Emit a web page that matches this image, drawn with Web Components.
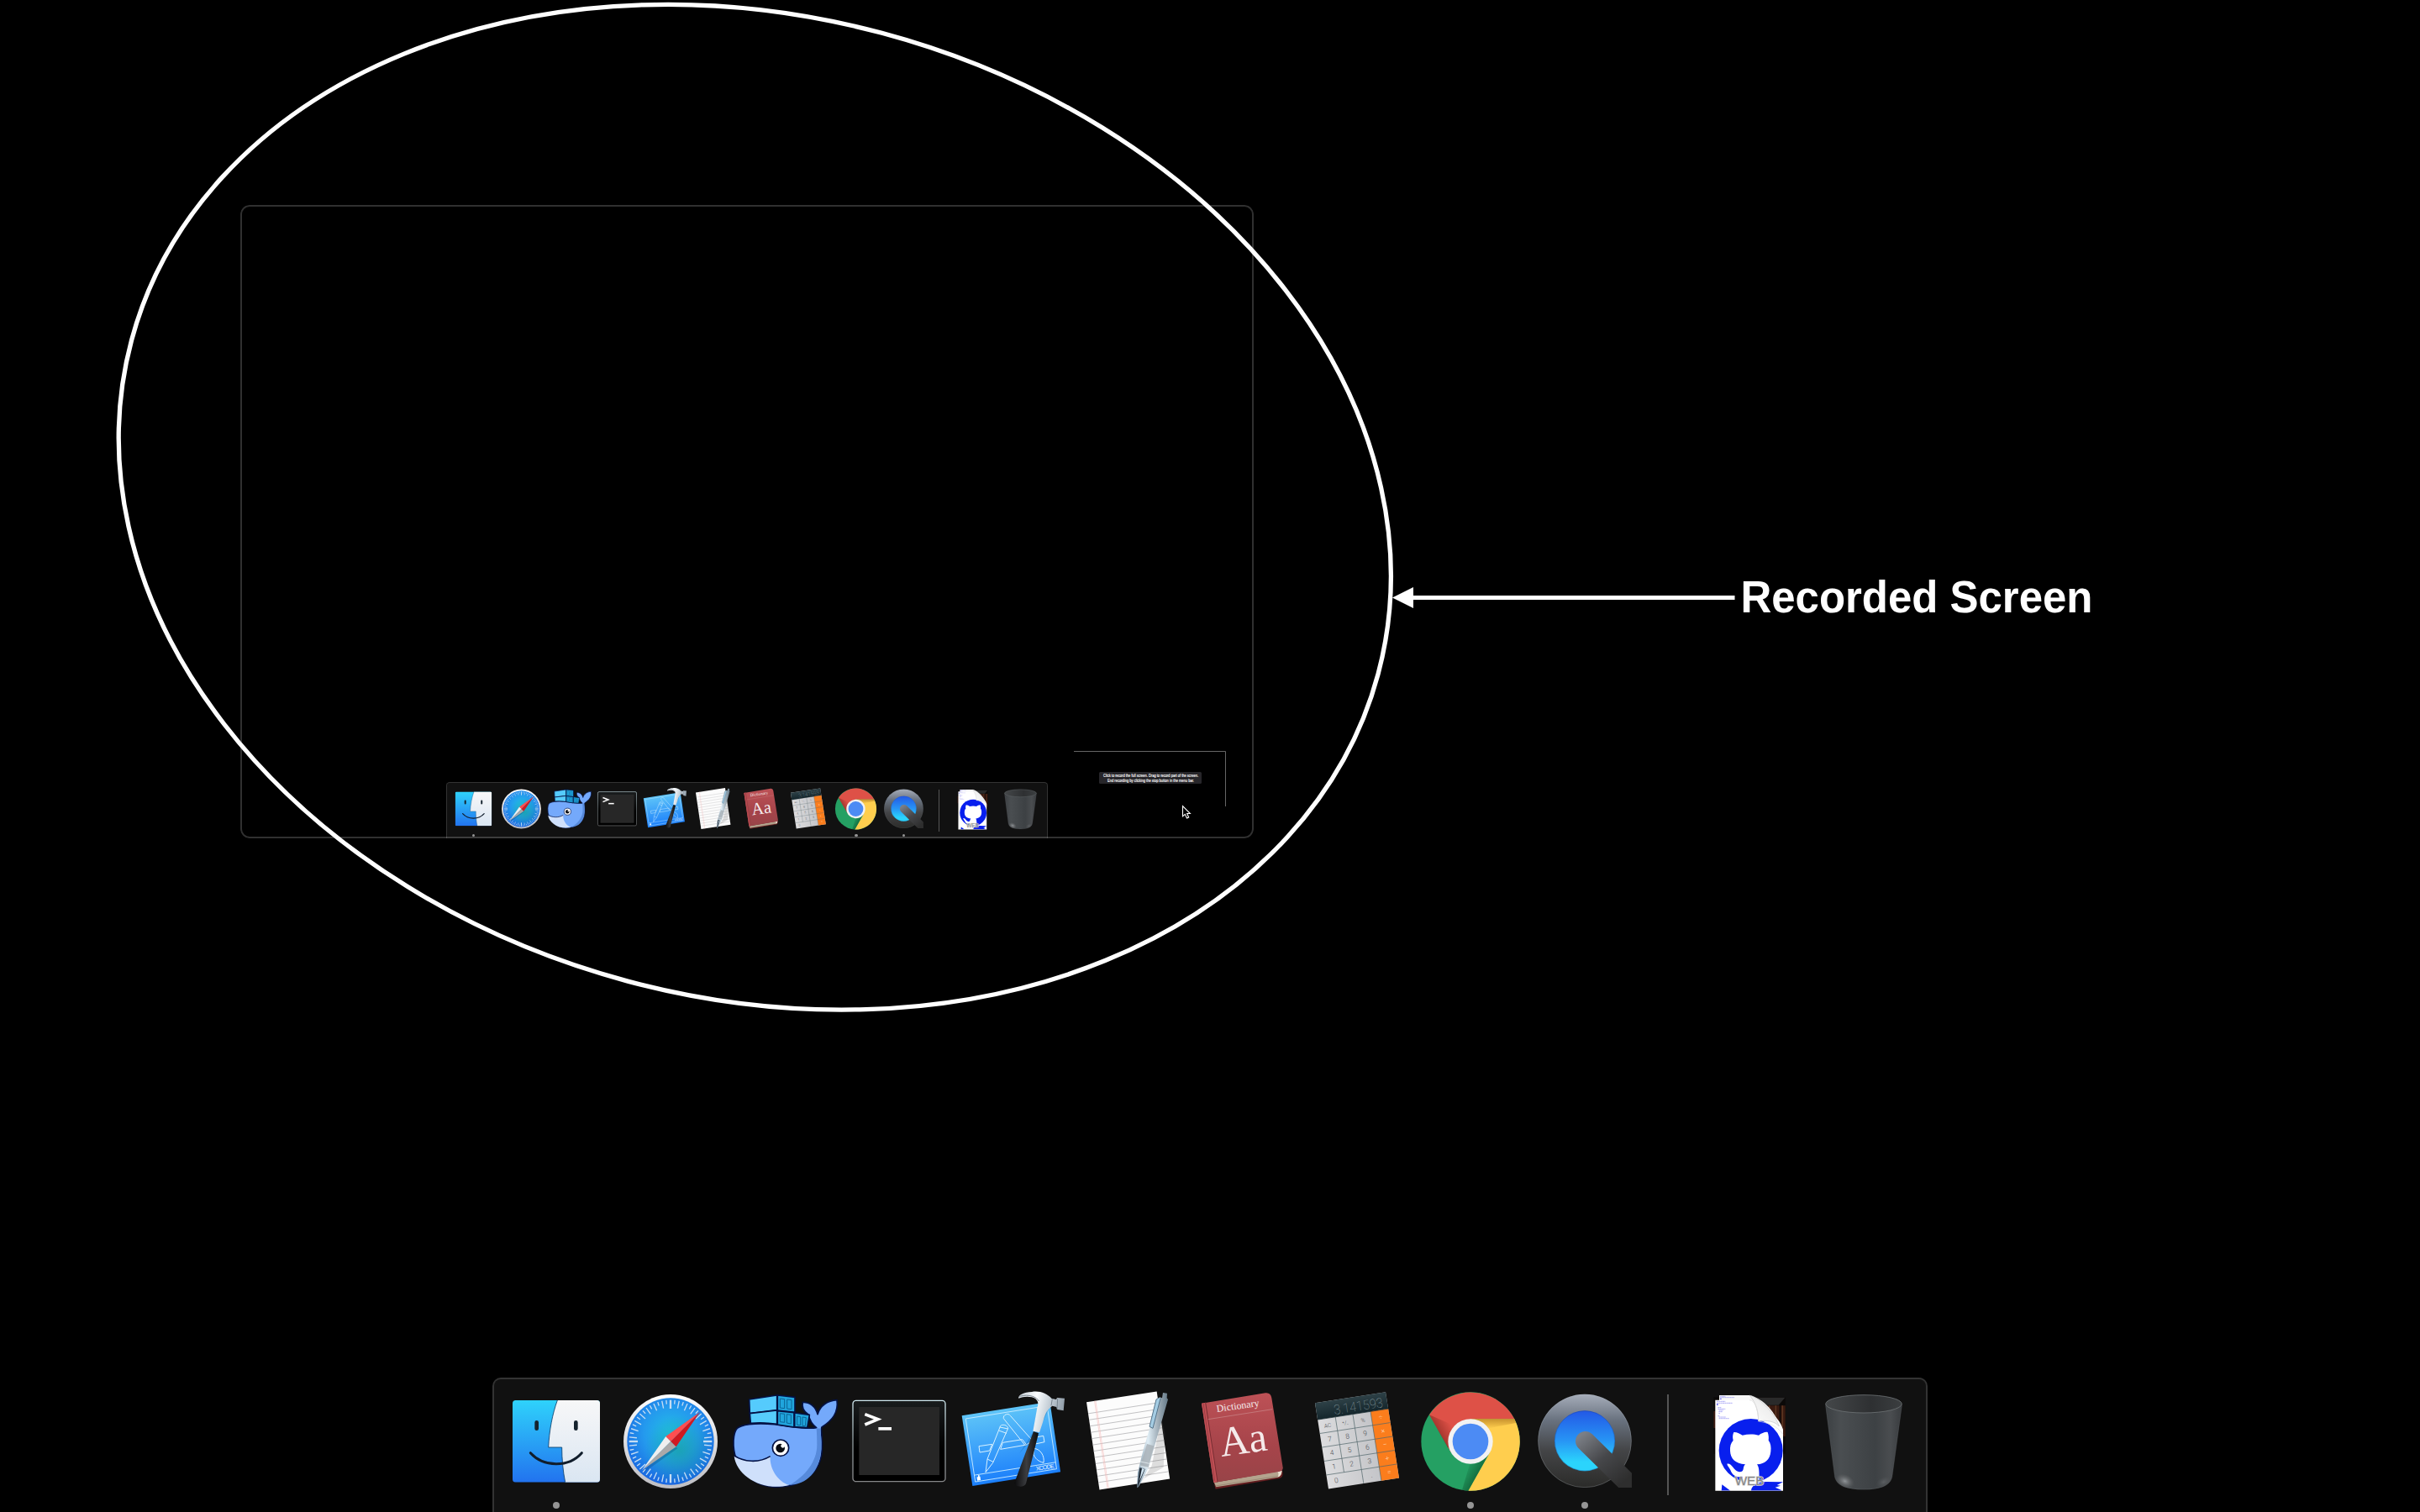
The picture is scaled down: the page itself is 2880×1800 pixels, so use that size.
<!DOCTYPE html>
<html lang="en">
<head>
<meta charset="utf-8">
<title>Recorded Screen</title>
<style>
html,body{margin:0;background:#000}
body{width:2880px;height:1800px;overflow:hidden;font-family:"Liberation Sans",Arial,sans-serif}
</style>
</head>
<body>
<desktop-screen>
  <recorded-window slot="canvas">
    <record-prompt slot="prompt"></record-prompt>
    <mac-dock slot="dock"></mac-dock>
  </recorded-window>
  <mac-dock slot="dock"></mac-dock>
  <screen-annotation slot="overlay"></screen-annotation>
</desktop-screen>
<script>
const define = (name, html) => customElements.define(name, class extends HTMLElement {
  constructor() { super(); this.attachShadow({ mode: 'open' }).innerHTML = html; }
});

/* Minute marks round the compass face */
const compassTicks = () => {
  let s = '';
  for (let i = 0; i < 60; i++) {
    const main = i % 15 === 0, long = i % 2 === 0 || main;
    s += `<path d="M684 110V${main ? 141 : long ? 137 : 124}" stroke-width="${main ? 7 : 4}" transform="rotate(${i * 6} 684 258)"/>`;
  }
  return s;
};

const paperRules = () => {
  let s = '';
  for (let y = 41; y < 310; y += 22.6) s += `<path d="M0 ${y}H254"/>`;
  return s;
};

const calcKeys = () => {
  const rows = [['AC', '⁺/₋', '%', '÷'], ['7', '8', '9', '×'], ['4', '5', '6', '−'], ['1', '2', '3', '+'], ['0', '', '.', '=']];
  let s = '';
  rows.forEach((r, j) => r.forEach((t, i) => {
    if (t) s += `<text x="${32 + i * 64}" y="${93 + j * 50}" font-size="${i === 3 ? 26 : j === 0 ? 20 : 25}" fill="${i === 3 ? '#ffd9b8' : '#4a4c50'}">${t}</text>`;
  }));
  return s;
};

const ICONS = {
finder: { x: 72, svg: `
<defs><linearGradient id="a" x1="0" y1="0" x2="0" y2="1"><stop offset="0" stop-color="#2fd2fb"/><stop offset="1" stop-color="#2273ef"/></linearGradient>
<linearGradient id="b" x1="0" y1="0" x2="0" y2="1"><stop offset="0" stop-color="#f7f7f8"/><stop offset="1" stop-color="#dae6f2"/></linearGradient>
<clipPath id="c"><rect x="120" y="111" width="312" height="293" rx="11"/></clipPath></defs>
<g clip-path="url(#c)"><rect x="120" y="111" width="312" height="293" fill="url(#a)"/>
<path d="M280 111C262 160 251 220 248 279H296C296 320 300 365 308 404H432V111Z" fill="url(#b)"/>
<path d="M280 111C262 160 251 220 248 279H296C296 320 300 365 308 404" fill="none" stroke="#0b3f6b" stroke-width="2.5"/></g>
<path d="M206 190V212M346 190V212" stroke="#15232e" stroke-width="14" stroke-linecap="round"/>
<path d="M184 299C230 350 320 352 367 299" fill="none" stroke="#111d2b" stroke-width="9" stroke-linecap="round"/>` },

safari: { x: 480, svg: `
<defs><radialGradient id="a" cx=".5" cy=".4" r=".62"><stop offset="0" stop-color="#22c0e6"/><stop offset=".5" stop-color="#2499ee"/><stop offset="1" stop-color="#1862e0"/></radialGradient>
<radialGradient id="g" cx=".6" cy=".6" r=".4"><stop offset="0" stop-color="#16a39a" stop-opacity=".65"/><stop offset="1" stop-color="#16a39a" stop-opacity="0"/></radialGradient>
<linearGradient id="b" x1="0" y1="0" x2="0" y2="1"><stop offset="0" stop-color="#fff"/><stop offset="1" stop-color="#bdbdc2"/></linearGradient></defs>
<circle cx="684" cy="258" r="168" fill="url(#b)"/><circle cx="684" cy="258" r="155" fill="url(#a)"/><circle cx="684" cy="258" r="155" fill="url(#g)"/>
<g stroke="#c5ddf3" fill="none">${compassTicks()}</g>
<path d="M582 364L666 240L684 258L704 277Z" fill="#0a3e73" opacity=".3" transform="translate(5 6)"/>
<path d="M582 361L667 240L685 258Z" fill="#efefef"/><path d="M582 361L685 258L704 277Z" fill="#aaa9a9"/>
<path d="M789 153L667 240L685 258Z" fill="#ff4e50"/><path d="M789 153L685 258L704 277Z" fill="#d01920"/>` },

docker: { x: 888, svg: `
<g stroke="#041245" stroke-width="5" stroke-linejoin="round">
<path d="M1205 209C1190 198 1180 180 1176 162C1158 150 1152 135 1156 118C1180 117 1202 132 1209 161C1218 130 1245 112 1278 110C1284 155 1262 182 1224 207C1219 216 1227 240 1225 285C1222 375 1150 421 1058 421C975 418 905 350 909 255C912 210 922 203 965 197C1020 190 1065 197 1110 205C1150 210 1185 213 1205 209Z" fill="#74a9fb"/>
<path d="M1219 212C1217 218 1225 240 1222 285C1216 370 1170 410 1108 414C1165 382 1207 330 1207 270C1207 245 1206 225 1205 211Z" fill="#568adb" stroke="none"/>
<path d="M911 311C944 332 1000 335 1040 311C1037 355 1067 402 1108 414C1010 438 920 380 911 311Z" fill="#cfe0fb" stroke="none"/>
<path d="M911 308C944 332 1000 336 1040 311" fill="none"/>
<path d="M965 108L1064 93V146L967 158Z" fill="#55cbfd"/><path d="M967 158L1064 147V196C1030 191 1000 190 970 193Z" fill="#56ccfc"/>
<path d="M1066 93L1128 100V154L1066 147Z" fill="#20a5dd"/><path d="M1066 149L1125 155V207L1066 198Z" fill="#20a5dd"/><path d="M1127 156L1180 163L1172 209L1127 206Z" fill="#20a5dd"/></g>
<path d="M1075 105L1091 107V140L1075 138ZM1100 108L1116 110V143L1100 141ZM1075 158L1091 160V190L1075 188ZM1099 161L1114 163V195L1099 192ZM1136 168L1148 170V200L1136 199ZM1155 171L1168 173L1165 203L1155 202Z" fill="none" stroke="#0b6496" stroke-width="3"/>
<circle cx="1077" cy="281" r="29" fill="#fff" stroke="#041245" stroke-width="5"/><circle cx="1076" cy="282" r="16" fill="#090b12"/><circle cx="1085" cy="274" r="7" fill="#fff"/>` },

terminal: { x: 6, svg: `
<defs><linearGradient id="a" x1="0" y1="0" x2="0" y2="1"><stop offset="0" stop-color="#cfe8ef"/><stop offset=".5" stop-color="#8e9a9e"/><stop offset="1" stop-color="#87888a"/></linearGradient>
<linearGradient id="b" x1="0" y1="0" x2="0" y2="1"><stop offset="0" stop-color="#191c1d"/><stop offset=".6" stop-color="#000"/></linearGradient></defs>
<rect x="45" y="112" width="330" height="289" rx="11" fill="url(#b)" stroke="url(#a)" stroke-width="4"/>
<rect x="67" y="135" width="287" height="243" fill="#272727"/>
<path d="M88 161L134 179L88 198" fill="none" stroke="#fff" stroke-width="11"/><path d="M136 212.500H183" stroke="#fff" stroke-width="11"/>` },

xcode: { x: 414, svg: `
<defs><linearGradient id="a" x1="0" y1="0" x2="0" y2="1"><stop offset="0" stop-color="#5ec4f8"/><stop offset="1" stop-color="#1b7ffb"/></linearGradient>
<linearGradient id="b" x1="0" y1="0" x2="1" y2=".2"><stop offset="0" stop-color="#c3ccd4"/><stop offset=".4" stop-color="#fbfdff"/><stop offset=".75" stop-color="#bcc7d0"/><stop offset="1" stop-color="#93a0ab"/></linearGradient>
<linearGradient id="c"><stop offset="0" stop-color="#0c0c0d"/><stop offset=".5" stop-color="#3c3d40"/><stop offset="1" stop-color="#0b0b0c"/></linearGradient></defs>
<g transform="matrix(.988 -.157 .15 .988 434 166)"><path d="M0 0H318V254H0Z" fill="url(#a)"/><path d="M12 13H306V241H12ZM12 217H306" fill="none" stroke="#cdeeff" stroke-width="2.500"/>
<text x="233" y="236" font-size="21" fill="#e8f6ff" textLength="66" font-family="Liberation Sans">XCODE</text><path d="M20 225h12v13h-12zM25 219h5v6h-5z" fill="#fff"/></g>
<g fill="none" stroke="#d9f2ff" stroke-width="3" stroke-linejoin="round">
<path d="M495 275L542 268L533 291L498 297ZM580 262L650 251L665 270L572 286ZM700 243L725 238L729 260L692 268Z"/>
<path d="M583 176C580 163 600 154 608 167L687 256L660 272ZM690 283C715 284 730 310 726 334C707 330 695 318 690 304Z"/>
<path d="M570 207C570 195 597 196 599 211L545 334L519 368L525 321ZM566 219L594 229M525 321L546 331M570 207L599 213"/></g>
<path d="M703 140L754 122L704 228L640 300L688 226Z" fill="#07569b" opacity=".28"/>
<path d="M690 222L708 229L663 408C659 424 621 422 622 405Z" fill="url(#c)"/>
<path d="M703 137C711 120 704 105 684 100C668 96 652 98 636 104C636 92 655 82 684 81C712 76 738 87 755 105L771 108L774 102L801 104L797 148L775 144L772 135L757 131C734 147 730 165 723 190L711 226L688 221Z" fill="url(#b)"/>
<path d="M640 97C675 87 702 100 709 114" fill="none" stroke="#7c8791" stroke-width="3"/><path d="M757 106L753 130M776 105L774 142" stroke="#78848f" stroke-width="3"/>` },

textedit: { x: 822, svg: `
<defs><linearGradient id="a"><stop offset="0" stop-color="#7c95a8"/><stop offset=".35" stop-color="#e0eef6"/><stop offset=".65" stop-color="#a5b3bd"/><stop offset="1" stop-color="#667a88"/></linearGradient></defs>
<g transform="matrix(.988 -.153 .147 .989 879 118)"><path d="M0 0H254V316H0Z" fill="#fcfcfc"/><g stroke="#a9a9ab" stroke-width="2">${paperRules()}</g><path d="M29 0V316M33 0V316" stroke="#f6b7b5" stroke-width="1.500"/></g>
<path d="M1146 175L1112 345L1062 424L1085 390L1154 350L1160 230Z" fill="#555" opacity=".18"/>
<path d="M1152 84L1167 86L1166 103L1170 108L1119 285L1100 353L1065 420L1059 424L1062 370L1079 300L1133 112L1140 100L1149 103Z" fill="url(#a)"/>
<path d="M1138 102L1128 108L1104 205L1116 211L1143 104" fill="#a5cde4" stroke="#54738a" stroke-width="3"/>
<path d="M1095 267L1120 274L1100 350L1070 344Z" fill="#a9b1b7" opacity=".85"/><path d="M1071 330L1104 337M1070 345L1100 353" stroke="#dce5ea" stroke-width="3"/>
<path d="M1069 352L1088 357L1066 411L1060 425Z" fill="#222c37"/><path d="M1077 354L1086 357L1068 400Z" fill="#d2e6f2"/>` },

dictionary: { x: 30, svg: `
<defs><linearGradient id="a" x1="0" y1="0" x2="0" y2="1"><stop offset="0" stop-color="#bd5156"/><stop offset=".6" stop-color="#a6444a"/><stop offset="1" stop-color="#984448"/></linearGradient></defs>
<path d="M133 402L140 428L368 390Q380 386 380 372L375 350Z" fill="#641e20"/>
<path d="M135 405L142 421L362 386Q376 381 376 362Z" fill="#b4a48e"/><path d="M139 417L362 382" stroke="#8d7c68" stroke-width="2"/><path d="M360 365Q368 372 362 385Q376 381 377 362Z" fill="#e9dfd0"/>
<path d="M90 122L318 85Q337 83 340 103L380 350Q383 362 366 366L133 405Z" fill="url(#a)"/>
<path d="M90 122L104 119L147 402L133 405Z" fill="#c04f55"/><path d="M104 119L147 402" stroke="#782d32" stroke-width="3"/><path d="M96 122L137 399" stroke="#8b343a" stroke-width="2"/>
<path d="M113 179L343 143" stroke="#cc8b8c" stroke-width="2"/>
<g fill="#f5eaea" font-family="Liberation Serif"><text transform="translate(145 153) rotate(-8)" font-size="36" textLength="153" lengthAdjust="spacingAndGlyphs">Dictionary</text>
<text transform="translate(161 312) rotate(-8)" font-size="150" textLength="169" lengthAdjust="spacingAndGlyphs">Aa</text></g>` },

calculator: { x: 438, svg: `
<defs><linearGradient id="a" x1="0" y1="0" x2="0" y2="1"><stop offset="0" stop-color="#2e4147"/><stop offset="1" stop-color="#14262c"/></linearGradient>
<linearGradient id="b"><stop offset="0" stop-color="#dcdcde"/><stop offset="1" stop-color="#bcbdc1"/></linearGradient></defs>
<g transform="matrix(.988 -.153 .155 .988 495 121)"><path d="M0 0H255V310H0Z" fill="url(#b)"/><path d="M0 0H255V60H0Z" fill="url(#a)"/><path d="M191 60H255V310H191Z" fill="#fb7d1c"/>
<path d="M0 110H255M0 160H255M0 210H255M0 260H255M64 60V260M127 60V310M191 60V310" stroke="#51666a" stroke-width="2"/>
<path d="M0 60H255" stroke="#14262c" stroke-width="2"/>
<text x="63" y="51" font-size="47" textLength="176" lengthAdjust="spacingAndGlyphs" fill="#8d9ea2" font-family="Roboto" font-weight="100">3.141593</text>
<g text-anchor="middle" font-family="Roboto" font-weight="300">${calcKeys()}</g></g>` },

chrome: { x: 846, svg: `
<defs><linearGradient id="s" x1="0" y1="0" x2="0" y2="1"><stop offset="0" stop-color="#9c6416" stop-opacity=".55"/><stop offset="1" stop-color="#9c6416" stop-opacity="0"/></linearGradient>
<linearGradient id="r" gradientUnits="userSpaceOnUse" x1="942" y1="232" x2="985" y2="207"><stop offset="0" stop-color="#7b221b" stop-opacity=".55"/><stop offset="1" stop-color="#7b221b" stop-opacity="0"/></linearGradient>
<linearGradient id="g" gradientUnits="userSpaceOnUse" x1="1080" y1="366" x2="1035" y2="340"><stop offset="0" stop-color="#0d5730" stop-opacity=".65"/><stop offset="1" stop-color="#0d5730" stop-opacity="0"/></linearGradient></defs>
<circle cx="1050" cy="258" r="176" fill="#25a063"/>
<path d="M903 163A176 176 0 0 1 1207 178L1050 178L981 298Z" fill="#de5147"/><path d="M1207 178A176 176 0 0 1 1042 434L1119 298L1050 178Z" fill="#ffce4e"/>
<path d="M903 163L970 282L1000 205Z" fill="url(#r)"/><path d="M1050 178H1207L1212 192L1110 212Z" fill="url(#s)"/><path d="M1042 434L1114 305L1050 330L1020 431Z" fill="url(#g)"/>
<circle cx="1050" cy="258" r="80" fill="#f2f2f2"/><circle cx="1050" cy="258" r="64" fill="#4c8bf4"/>` },

quicktime: { x: 54, svg: `
<defs><linearGradient id="a" gradientUnits="userSpaceOnUse" x1="0" y1="88" x2="0" y2="424"><stop offset="0" stop-color="#a7aebb"/><stop offset=".28" stop-color="#69727f"/><stop offset=".6" stop-color="#444547"/><stop offset="1" stop-color="#2b2b29"/></linearGradient>
<linearGradient id="b" x1="0" y1="0" x2="0" y2="1"><stop offset="0" stop-color="#2358e6"/><stop offset=".5" stop-color="#2795f5"/><stop offset=".85" stop-color="#2bd4fc"/></linearGradient>
<linearGradient id="t" gradientUnits="userSpaceOnUse" x1="258" y1="225" x2="400" y2="400"><stop offset="0" stop-color="#7b7f86"/><stop offset=".5" stop-color="#46474a"/><stop offset="1" stop-color="#2e2e2e"/></linearGradient>
<clipPath id="c"><path d="M90 88H426V423H90Z"/></clipPath></defs>
<g clip-path="url(#c)"><circle cx="258" cy="256" r="167" fill="url(#a)"/><circle cx="258" cy="256" r="166" fill="none" stroke="#b3bac5" stroke-opacity=".25" stroke-width="3"/>
<circle cx="258" cy="256" r="108" fill="url(#b)"/><circle cx="258" cy="256" r="107" fill="none" stroke="#17408e" stroke-opacity=".35" stroke-width="3"/>
<path d="M260 257L450 444" stroke="url(#t)" stroke-width="70" stroke-linecap="round"/></g>` },

web: { x: 642, svg: `
<defs><linearGradient id="a" x1="0" y1="1" x2="1" y2="0"><stop offset="0" stop-color="#fff"/><stop offset=".6" stop-color="#eee"/><stop offset="1" stop-color="#bbb"/></linearGradient>
<clipPath id="c"><path d="M724 110H850C890 120 950 165 966 215V434H724Z"/></clipPath></defs>
<path d="M718 100H974V302H718Z" fill="#0b0908"/><path d="M850 101H973L950 128H880Z" fill="#2a2a2a"/><path d="M895 130H953V236H895ZM958 130H974V240H958ZM718 150H726V210H718Z" fill="#3a1a10"/><path d="M905 130V180M917 130V200M940 130V210M964 130V205" stroke="#5e3822" stroke-width="4"/>
<path d="M738 93H846C895 103 945 160 952 205V300H738Z" fill="#f7f7f7"/>
<path d="M724 110H850C890 120 950 165 966 215V434H724Z" fill="#fff"/>
<g clip-path="url(#c)"><circle cx="851" cy="291" r="114" fill="#081fee"/>
<path d="M790 225C800 224 813 231 821 236C840 231 862 231 879 236C889 229 902 223 911 225C915 236 915 246 914 254C922 264 924 278 922 294C919 323 902 338 873 340C880 350 882 362 880 405H822C821 395 822 391 821 384C795 389 783 374 778 360C773 350 767 345 766 338C784 335 789 362 807 366C816 368 822 365 824 357C825 349 827 344 831 340C796 338 778 320 777 292C776 276 779 264 788 254C785 244 786 233 790 225Z" fill="#fff"/>
<path d="M748 412L778 434H746ZM852 434C852 414 880 402 905 402L966 403L944 414L957 416L938 422L960 432V434Z" fill="#081fee"/></g>
<path d="M846 93C860 108 878 140 878 186C905 180 940 187 952 204C940 165 890 105 846 93Z" fill="url(#a)" stroke="#b5b5b5" stroke-width="1.500"/>
<path d="M846 110C866 112 878 140 878 186M878 186C905 190 945 200 965 232" fill="none" stroke="#ddd" stroke-width="2"/>
<g stroke="#8583f0" stroke-width="2"><path d="M741 97H760M741 101H792" stroke-dasharray="5 1"/><path d="M729 115H760M729 121H786" stroke-dasharray="6 1"/><path d="M733 137H746M733 142H760M737 147H752M736 152H750M736 158H742M733 167H740M737 171H762M737 176H774" stroke-dasharray="5 1"/></g><path d="M729 124h5v5h-5zM741 104h5v4h-5z" fill="#6260ef"/>
<text x="794" y="415" font-size="46" textLength="104" lengthAdjust="spacingAndGlyphs" font-family="Liberation Sans" fill="#858585" stroke="#d8d8d8" stroke-width="4" paint-order="stroke">WEB</text>` },

trash: { x: 1050, svg: `
<defs><linearGradient id="a"><stop offset="0" stop-color="#3c4043"/><stop offset=".2" stop-color="#4a4e51"/><stop offset=".65" stop-color="#3d4144"/><stop offset=".85" stop-color="#4a4d50"/><stop offset="1" stop-color="#383b3e"/></linearGradient>
<linearGradient id="b"><stop offset="0" stop-color="#444749"/><stop offset=".6" stop-color="#2e3032"/><stop offset="1" stop-color="#3b3e40"/></linearGradient>
<radialGradient id="g"><stop offset="0" stop-color="#afb4b8" stop-opacity=".7"/><stop offset="1" stop-color="#777" stop-opacity="0"/></radialGradient></defs>
<path d="M1117 125L1150 380C1153 413 1190 430 1254 430C1318 430 1352 413 1356 380L1391 125Z" fill="url(#a)"/>
<ellipse cx="1187" cy="400" rx="35" ry="24" fill="url(#g)" transform="rotate(25 1187 400)"/><ellipse cx="1325" cy="403" rx="28" ry="18" fill="url(#g)" opacity=".3" transform="rotate(-25 1325 403)"/>
<ellipse cx="1254" cy="124" rx="136" ry="32" fill="url(#b)" stroke="#6c7174" stroke-width="2.500"/>
<path d="M1118 130L1150 380C1153 413 1190 429 1254 429C1318 429 1352 413 1356 380L1390 130" fill="none" stroke="#6a6f73" stroke-opacity=".4" stroke-width="2"/>` }
};

/* One launcher tile with its running indicator */
customElements.define('dock-icon', class extends HTMLElement {
  connectedCallback() {
    const icon = ICONS[this.getAttribute('name')];
    this.attachShadow({ mode: 'open' }).innerHTML = `
    <style>:host{display:flex;flex-direction:column;align-items:center;width:136px;height:158px;flex:none}
    svg{display:block;width:136px;height:146px}i{width:8px;height:8px;border-radius:50%}:host([running]) i{background:#959595}</style>
    <svg viewBox="${icon.x} 36 408 438">${icon.svg}</svg><i></i>`;
  }
});

define('mac-dock', `
<style>:host{display:flex;box-sizing:border-box;width:1708px;height:160px;padding:0 6px;background:#111;border:2px solid #333;border-bottom:0;border-radius:10px 10px 0 0;justify-content:center}
.rule{box-sizing:border-box;width:60px;display:flex;justify-content:center;padding:18px 0 0 2px}.rule b{width:2px;height:120px;background:#555}</style>
<dock-icon name="finder" running></dock-icon><dock-icon name="safari"></dock-icon><dock-icon name="docker"></dock-icon><dock-icon name="terminal"></dock-icon><dock-icon name="xcode"></dock-icon><dock-icon name="textedit"></dock-icon><dock-icon name="dictionary"></dock-icon><dock-icon name="calculator"></dock-icon><dock-icon name="chrome" running></dock-icon><dock-icon name="quicktime" running></dock-icon><div class="rule"><b></b></div><dock-icon name="web"></dock-icon><dock-icon name="trash"></dock-icon>`);

define('record-prompt', `
<style>:host{display:block;width:182px;height:82px}svg{display:block;overflow:visible}</style>
<svg width="182" height="82" viewBox="1278 894 182 82">
<path d="M1278 894.500H1458.500V960" fill="none" stroke="#666"/>
<rect x="1308" y="919" width="122" height="14" rx="1.500" fill="#27262a"/>
<g font-family="Liberation Sans" font-size="5" fill="#fff" stroke="#fff" stroke-width=".12"><text x="1313" y="925" textLength="113" lengthAdjust="spacingAndGlyphs">Click to record the full screen. Drag to record part of the screen.</text>
<text x="1318" y="931" textLength="103" lengthAdjust="spacingAndGlyphs">End recording by clicking the stop button in the menu bar.</text></g>
<path d="M1407.500 959.500V971.800L1410.300 969.300L1412.500 974L1414.700 973L1412.600 968.500H1416.400Z" fill="#000" stroke="#fff" stroke-width="1.100"/>
</svg>`);

define('recorded-window', `
<style>:host{display:flex;flex-direction:column;justify-content:flex-end;position:relative;box-sizing:border-box;width:1206px;height:754px;border-radius:11px;overflow:hidden;background:#000}
:host::after{content:"";position:absolute;inset:0;border:2px solid rgba(255,255,255,.19);border-radius:11px;pointer-events:none}
.prompt{display:flex;justify-content:flex-end;padding-right:32px;height:37px;align-items:flex-start}
.dock{display:flex;justify-content:center;height:67px}
::slotted(mac-dock){zoom:.41875}</style>
<div class="prompt"><slot name="prompt"></slot></div><div class="dock"><slot name="dock"></slot></div>`);

define('screen-annotation', `
<style>:host{display:block}svg{display:block}</style>
<svg width="2880" height="1800" viewBox="0 0 2880 1800" fill="none">
<ellipse cx="898.300" cy="603.700" rx="767.900" ry="584.300" transform="rotate(15 898.300 603.700)" stroke="#fff" stroke-width="5.300"/>
<path d="M1680 711.500H2064.500" stroke="#fff" stroke-width="5"/><path d="M1657 711.500L1682 699V724Z" fill="#fff"/>
<text transform="translate(2071.500 729) scale(1 1.045)" font-family="Liberation Sans" font-weight="700" font-size="51" fill="#fff" textLength="419">Recorded Screen</text>
</svg>`);

define('desktop-screen', `
<style>:host{display:grid;grid-template-rows:1640px 160px;justify-items:center;position:relative;width:2880px;height:1800px;overflow:hidden;background:#000}
.canvas{justify-self:start;padding:244px 0 0 286px}.overlay{position:absolute;inset:0;pointer-events:none}</style>
<div class="canvas"><slot name="canvas"></slot></div><slot name="dock"></slot><div class="overlay"><slot name="overlay"></slot></div>`);
</script>
</body>
</html>
